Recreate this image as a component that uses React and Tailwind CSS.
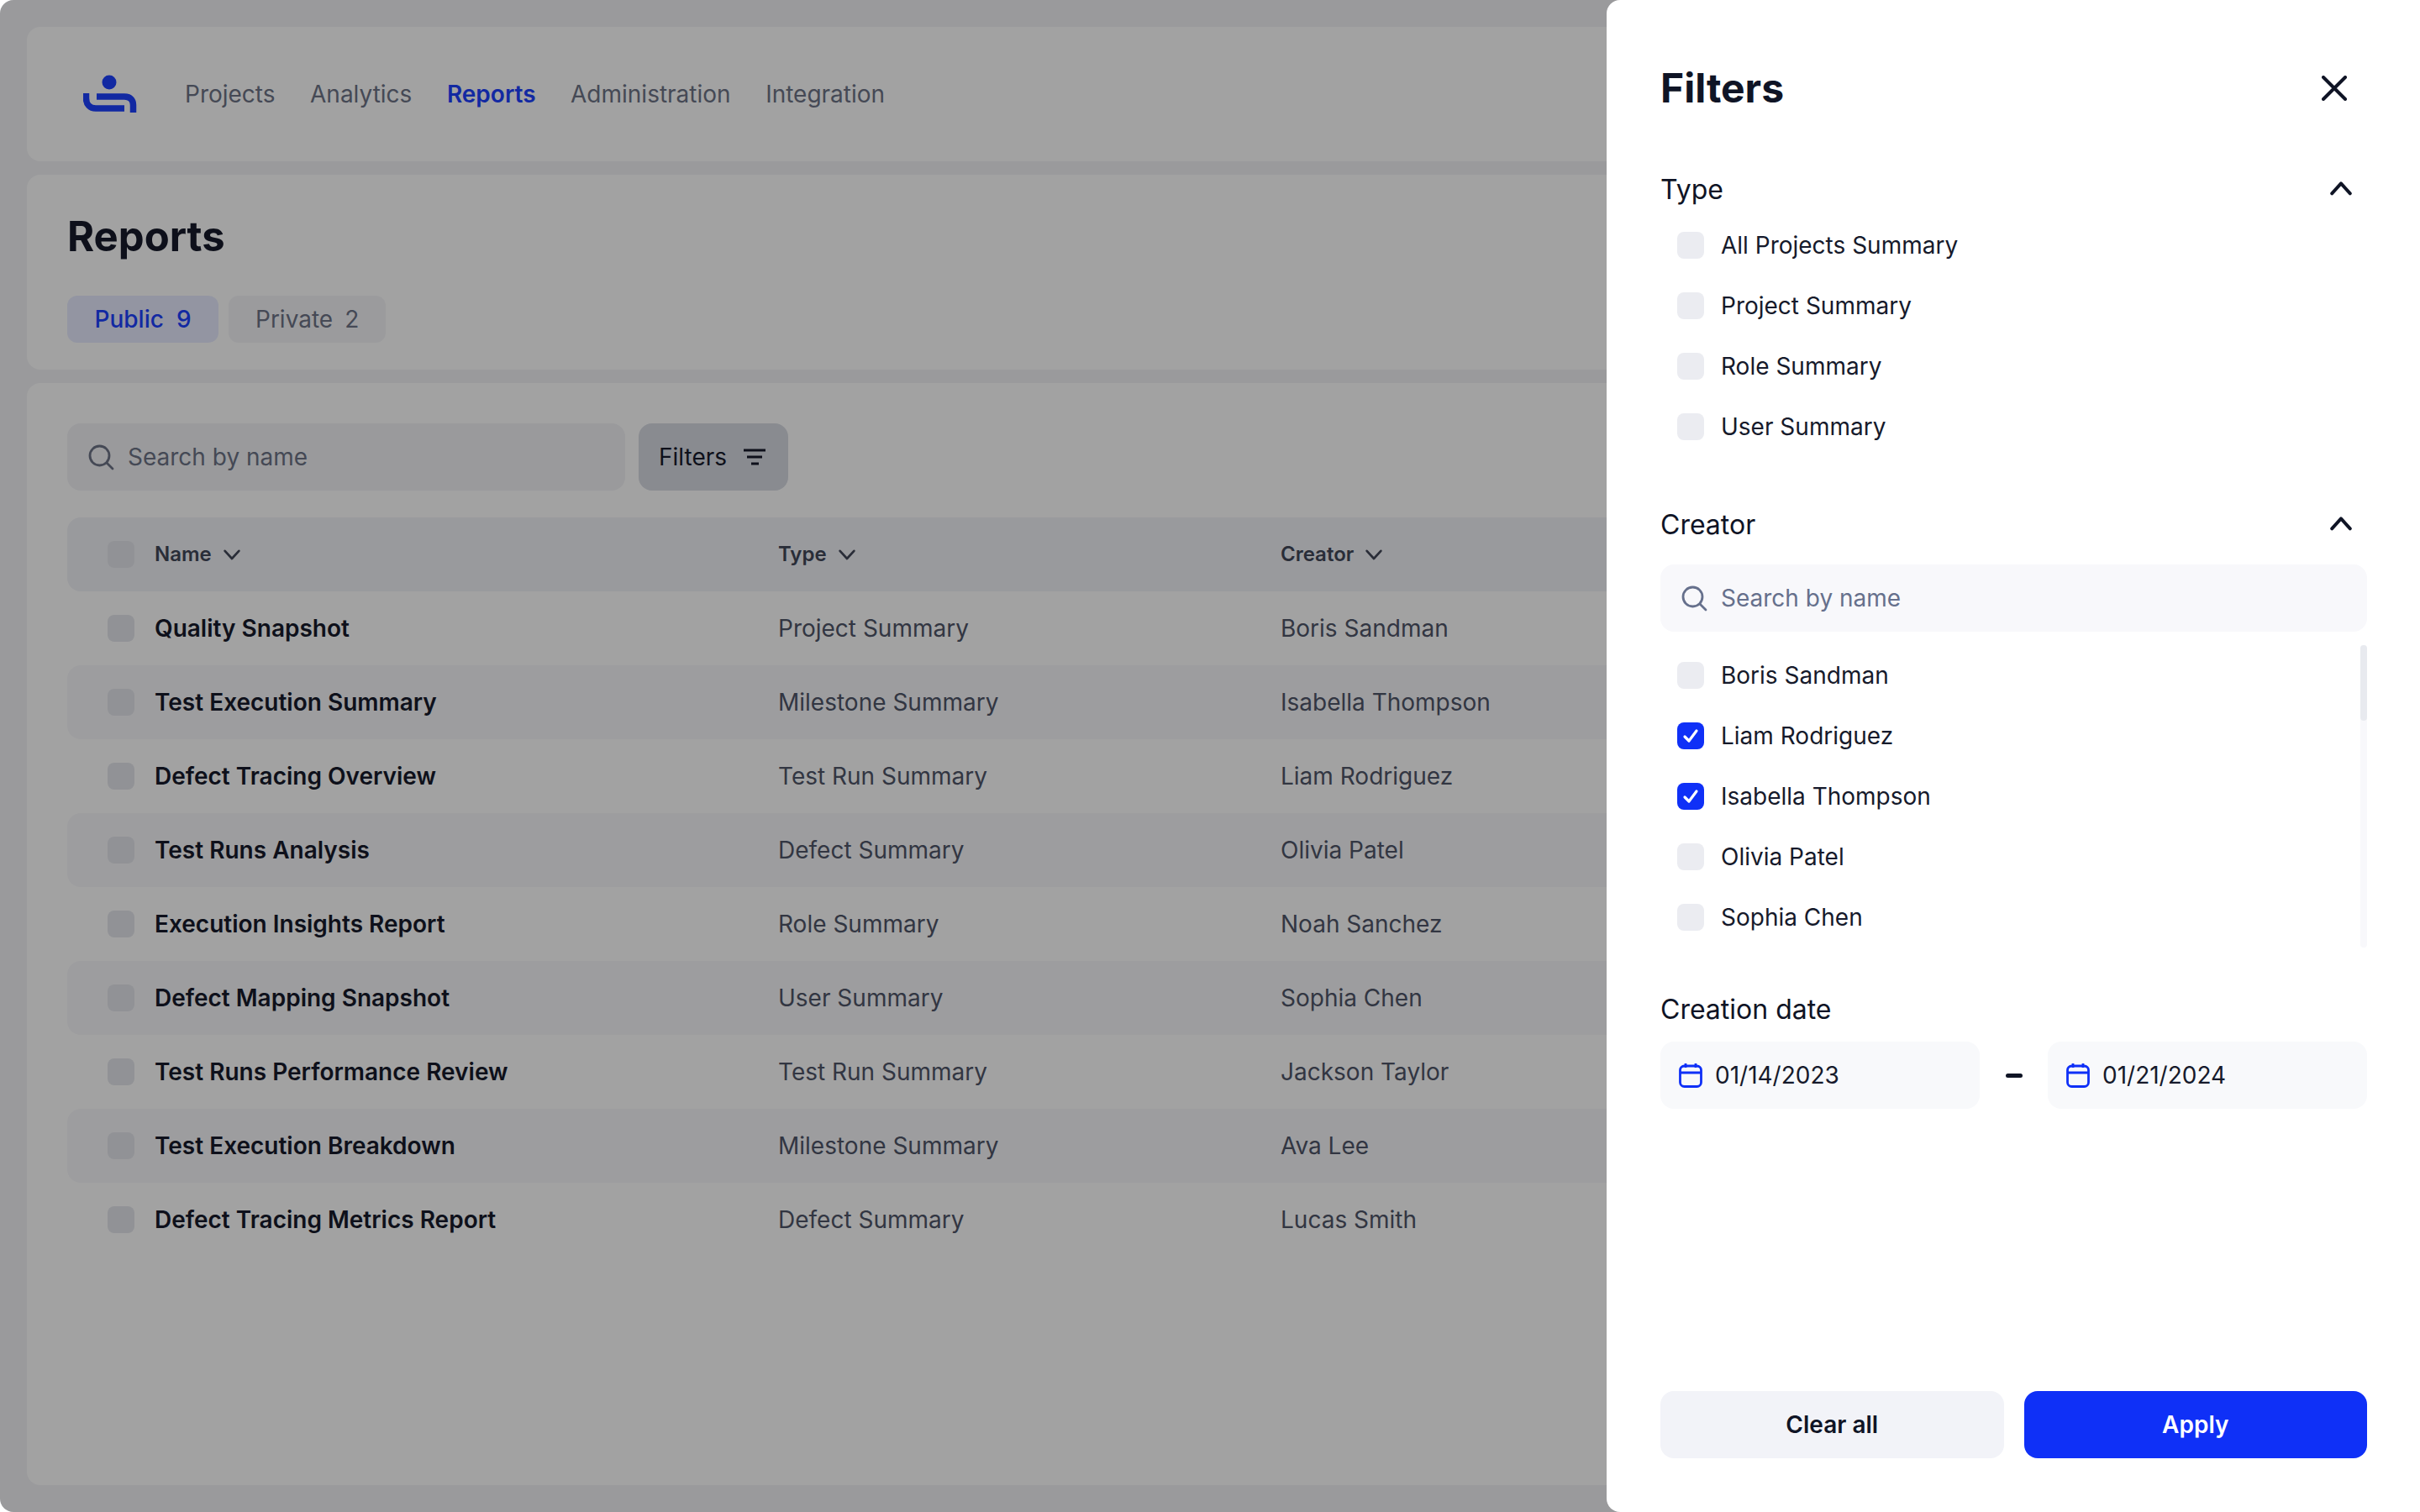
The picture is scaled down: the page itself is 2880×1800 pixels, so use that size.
const font = { fontFamily: "Inter, 'Liberation Sans', sans-serif" };

const navItems = ["Projects", "Analytics", "Reports", "Administration", "Integration"];

const rows = [
  ["Quality Snapshot", "Project Summary", "Boris Sandman"],
  ["Test Execution Summary", "Milestone Summary", "Isabella Thompson"],
  ["Defect Tracing Overview", "Test Run Summary", "Liam Rodriguez"],
  ["Test Runs Analysis", "Defect Summary", "Olivia Patel"],
  ["Execution Insights Report", "Role Summary", "Noah Sanchez"],
  ["Defect Mapping Snapshot", "User Summary", "Sophia Chen"],
  ["Test Runs Performance Review", "Test Run Summary", "Jackson Taylor"],
  ["Test Execution Breakdown", "Milestone Summary", "Ava Lee"],
  ["Defect Tracing Metrics Report", "Defect Summary", "Lucas Smith"],
];

const typeOptions = ["All Projects Summary", "Project Summary", "Role Summary", "User Summary"];

const creators = [
  ["Boris Sandman", false],
  ["Liam Rodriguez", true],
  ["Isabella Thompson", true],
  ["Olivia Patel", false],
  ["Sophia Chen", false],
];

function Logo() {
  return (
    <svg width="64" height="46" viewBox="0 0 64 46" fill="none">
      <circle cx="31" cy="9" r="8.5" fill="#1d41ff" />
      <path d="M3.5 22V28C3.5 35 8 40 15 40H49" stroke="#1d41ff" strokeWidth="7.5" />
      <path d="M16 26H49C57 26 59.5 31 59.5 36V45" stroke="#1d41ff" strokeWidth="7.5" />
    </svg>
  );
}

function SearchIcon({ className }) {
  return (
    <svg width="32" height="32" viewBox="0 0 32 32" fill="none" className={className}>
      <circle cx="14.5" cy="14.5" r="11.5" stroke="currentColor" strokeWidth="2.8" />
      <path d="M23 23L30 30" stroke="currentColor" strokeWidth="2.8" strokeLinecap="round" />
    </svg>
  );
}

function Chevron({ up, size = 20 }) {
  return (
    <svg width={size} height={size} viewBox="0 0 24 24" fill="none">
      <path
        d={up ? "M2 16L12 5L22 16" : "M2 7L12 18L22 7"}
        stroke="currentColor"
        strokeWidth={up ? 3.6 : 3.2}
        strokeLinecap="round"
        strokeLinejoin="round"
      />
    </svg>
  );
}

function CalendarIcon() {
  return (
    <svg width="28" height="30" viewBox="0 0 28 30" fill="none" className="text-[#0f30f7] shrink-0">
      <rect x="1.5" y="4" width="25" height="24.5" rx="5" stroke="currentColor" strokeWidth="2.8" />
      <path d="M1.5 12H26.5M8 1V6M20 1V6" stroke="currentColor" strokeWidth="2.8" />
    </svg>
  );
}

function Checkbox({ checked }) {
  if (checked) {
    return (
      <div className="w-8 h-8 rounded-lg bg-[#0f30f7] flex items-center justify-center shrink-0">
        <svg width="22" height="22" viewBox="0 0 22 22" fill="none">
          <path d="M4 12L9 17L18 5" stroke="white" strokeWidth="3.2" strokeLinecap="round" strokeLinejoin="round" />
        </svg>
      </div>
    );
  }
  return <div className="w-8 h-8 rounded-lg bg-[#ebecf1] shrink-0" />;
}

function OptionRow({ label, checked }) {
  return (
    <div className="h-8 flex items-center gap-[20px] pl-5 mb-[40px]">
      <Checkbox checked={checked} />
      <span className="text-[28px] text-[#161a2b]">{label}</span>
    </div>
  );
}

function FilterHeader({ label }) {
  return (
    <div className="flex items-center justify-between pr-[18px] text-[#0f1425]">
      <span className="text-[32px]">{label}</span>
      <Chevron up size={26} />
    </div>
  );
}

function DateField({ value }) {
  return (
    <div className="flex-1 h-20 rounded-2xl bg-[#f8f9fb] flex items-center gap-[15px] pl-[22px] text-[28px] text-[#161a2b]">
      <CalendarIcon />
      {value}
    </div>
  );
}

function FiltersDrawer() {
  return (
    <div className="absolute top-0 bottom-0 right-0 w-[968px] bg-white rounded-l-2xl pl-16 pr-[63px] pb-16 flex flex-col">
      <div className="flex items-center justify-between h-[60px] mt-[75px] pr-6 text-[#0f1425]">
        <h2 className="text-[48px] font-bold">Filters</h2>
        <svg width="30" height="30" viewBox="0 0 30 30" fill="none">
          <path d="M2 2L28 28M28 2L2 28" stroke="currentColor" strokeWidth="4" strokeLinecap="round" />
        </svg>
      </div>

      <div className="mt-[67px]">
        <FilterHeader label="Type" />
        <div className="mt-[26px]">
          {typeOptions.map((t) => (
            <OptionRow key={t} label={t} />
          ))}
        </div>
      </div>

      <div className="mt-[37px]">
        <FilterHeader label="Creator" />
        <div className="mt-[23px] h-20 rounded-2xl bg-[#f8f8fb] flex items-center gap-4 pl-6 text-[#66708c] text-[28px]">
          <SearchIcon className="text-[#66708c]" />
          Search by name
        </div>
        <div className="relative h-[360px] mt-4 pt-5">
          {creators.map(([name, checked]) => (
            <OptionRow key={name} label={name} checked={checked} />
          ))}
          <div className="absolute top-0 bottom-0 right-0 w-2 rounded-full bg-[#f8f8fb]">
            <div className="h-[90px] rounded-full bg-[#e8eaef]" />
          </div>
        </div>
      </div>

      <div className="mt-[52px] text-[32px] text-[#0f1425] leading-[44px]">Creation date</div>
      <div className="flex items-center mt-[16px]">
        <DateField value="01/14/2023" />
        <div className="w-[81px] flex justify-center">
          <div className="w-5 h-[5px] bg-[#0f1425] rounded-sm" />
        </div>
        <DateField value="01/21/2024" />
      </div>

      <div className="mt-auto flex gap-6">
        <button className="flex-1 h-20 rounded-2xl bg-[#f2f3f8] text-[28px] font-semibold text-[#0f1425]">Clear all</button>
        <button className="flex-1 h-20 rounded-2xl bg-[#0f30f7] text-[28px] font-semibold text-white">Apply</button>
      </div>
    </div>
  );
}

function ReportsTable() {
  return (
    <div className="mt-8">
      <div className="h-[88px] rounded-2xl bg-[#f1f2f7] flex items-center pl-12 text-[24px] font-semibold text-[#414758]">
        <div className="w-8 h-8 rounded-lg bg-[#e4e6ec] mr-6" />
        <div className="w-[742px] flex items-center gap-[14px]">
          Name <Chevron />
        </div>
        <div className="w-[598px] flex items-center gap-[14px]">
          Type <Chevron />
        </div>
        <div className="flex items-center gap-[14px]">
          Creator <Chevron />
        </div>
      </div>
      {rows.map(([name, type, creator], i) => (
        <div key={name} className={`h-[88px] rounded-2xl flex items-center pl-12 text-[28px] ${i % 2 === 1 ? "bg-[#f8f8fb]" : ""}`}>
          <div className="w-8 h-8 rounded-lg bg-[#e4e6ec] mr-6" />
          <div className="w-[742px] font-semibold text-[#161a2b]">{name}</div>
          <div className="w-[598px] text-[#4f5569]">{type}</div>
          <div className="text-[#4f5569]">{creator}</div>
        </div>
      ))}
    </div>
  );
}

export default function App() {
  return (
    <div className="bg-white w-[2880px] h-[1800px] overflow-hidden" style={font}>
      <div className="relative h-full rounded-l-2xl overflow-hidden bg-[#f2f3f6] p-8 flex flex-col gap-4">
        <div className="h-40 shrink-0 rounded-2xl bg-white flex items-center pl-[67px]">
          <Logo />
          <nav className="flex gap-[41.5px] ml-[57px] text-[28px]">
            {navItems.map((item) => (
              <span key={item} className={item === "Reports" ? "font-semibold text-[#1d41ff]" : "text-[#6d7387]"}>
                {item}
              </span>
            ))}
          </nav>
        </div>

        <div className="h-[232px] shrink-0 rounded-2xl bg-white pl-12 pt-[42px]">
          <h1 className="text-[49px] leading-[64px] font-bold text-[#161a2b]">Reports</h1>
          <div className="flex gap-3 mt-[38px] text-[28px] font-medium">
            <div className="h-14 w-[180px] justify-center rounded-xl bg-[#e7ebff] text-[#1d41ff] flex items-center gap-[15px]">
              <span>Public</span>
              <span>9</span>
            </div>
            <div className="h-14 px-8 rounded-xl bg-[#f4f5f8] text-[#6d7387] font-normal flex items-center gap-[14px]">
              <span>Private</span>
              <span>2</span>
            </div>
          </div>
        </div>

        <div className="flex-1 rounded-2xl bg-white px-12 pt-12">
          <div className="flex gap-4">
            <div className="w-[664px] h-20 rounded-2xl bg-[#f2f3f6] flex items-center gap-4 pl-6 text-[28px] text-[#6d7387]">
              <SearchIcon />
              Search by name
            </div>
            <div className="w-[178px] h-20 rounded-2xl bg-[#d8dbe3] flex items-center gap-[19px] pl-6 text-[28px] text-[#161a2b]">
              Filters
              <svg width="28" height="24" viewBox="0 0 28 24" fill="none">
                <path d="M1 4H27M5 12H23M10 20H19" stroke="currentColor" strokeWidth="3" />
              </svg>
            </div>
          </div>
          <ReportsTable />
        </div>

        <div className="absolute inset-0 bg-black/[0.365]" />
        <FiltersDrawer />
      </div>
    </div>
  );
}
